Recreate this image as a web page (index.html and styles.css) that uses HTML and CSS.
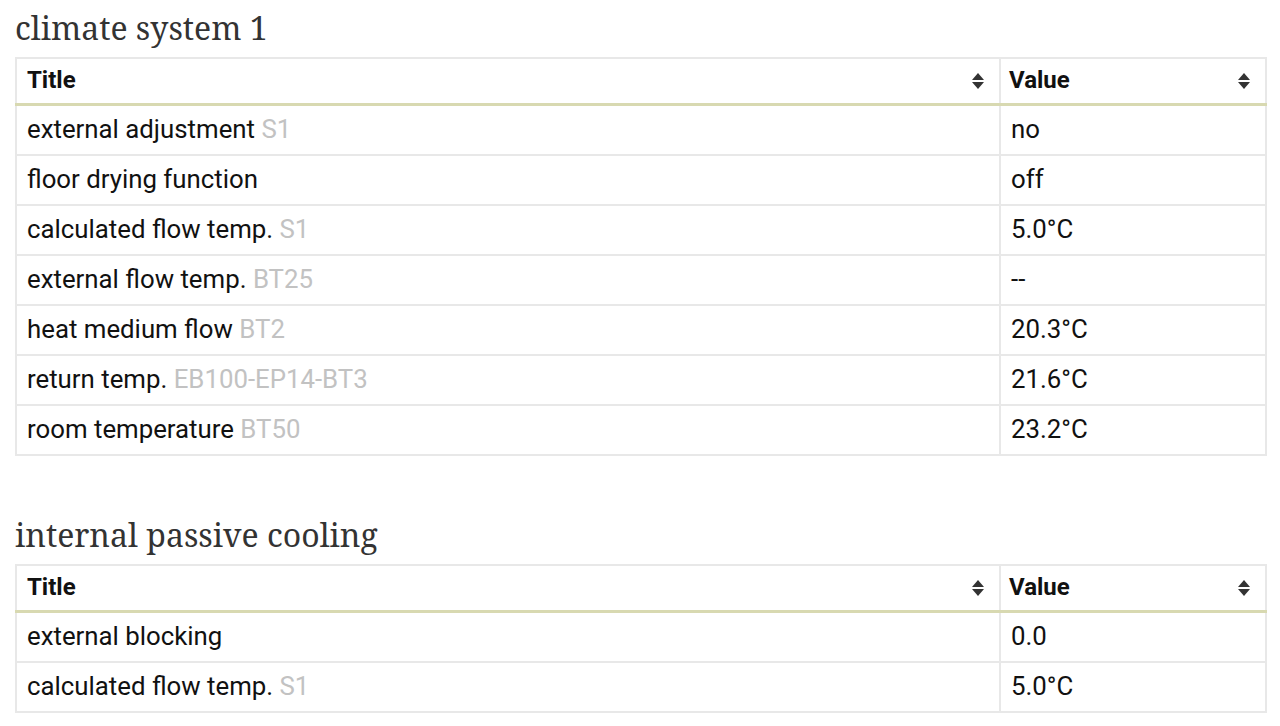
FILE: index.html
```html
<!DOCTYPE html>
<html>
<head>
<meta charset="utf-8">
<link rel="stylesheet" href="styles.css">
</head>
<body>
<section class="group">
  <h2 class="group-title">climate system 1</h2>
  <table class="data">
    <colgroup><col class="c-title"><col class="c-value"></colgroup>
    <thead>
      <tr><th><span class="th-in">Title<span class="sort"></span></span></th><th><span class="th-in">Value<span class="sort"></span></span></th></tr>
    </thead>
    <tbody>
      <tr><td>external adjustment <span class="tag">S1</span></td><td>no</td></tr>
      <tr><td>floor drying function</td><td>off</td></tr>
      <tr><td>calculated flow temp. <span class="tag">S1</span></td><td>5.0°C</td></tr>
      <tr><td>external flow temp. <span class="tag">BT25</span></td><td>--</td></tr>
      <tr><td>heat medium flow <span class="tag">BT2</span></td><td>20.3°C</td></tr>
      <tr><td>return temp. <span class="tag">EB100-EP14-BT3</span></td><td>21.6°C</td></tr>
      <tr><td>room temperature <span class="tag">BT50</span></td><td>23.2°C</td></tr>
    </tbody>
  </table>
</section>
<section class="group">
  <h2 class="group-title">internal passive cooling</h2>
  <table class="data">
    <colgroup><col class="c-title"><col class="c-value"></colgroup>
    <thead>
      <tr><th><span class="th-in">Title<span class="sort"></span></span></th><th><span class="th-in">Value<span class="sort"></span></span></th></tr>
    </thead>
    <tbody>
      <tr><td>external blocking</td><td>0.0</td></tr>
      <tr><td>calculated flow temp. <span class="tag">S1</span></td><td>5.0°C</td></tr>
    </tbody>
  </table>
</section>
</body>
</html>
```

FILE: styles.css
```css
html, body { margin: 0; padding: 0; background: #fff; }
body { padding: 0 15px; font-family: Roboto, "Liberation Sans", sans-serif; color: #111; }
.group { margin-bottom: 51px; }
.group-title {
  font-family: "Noto Serif", "DejaVu Serif", serif;
  font-weight: normal;
  font-size: 32px;
  color: #333;
  margin: 0;
  padding-top: 6px;
  height: 51px;
  line-height: 44px;
}
.data {
  width: 1250px;
  border-collapse: collapse;
  table-layout: fixed;
  font-size: 25.8px;
  border: 2px solid #e8e8e8;
}
.c-title { width: 984px; }
.c-value { width: 266px; }
.data th, .data td {
  border: 2px solid #e8e8e8;
  text-align: left;
  padding: 0 10px 3px;
}
.data th {
  height: 41px;
  font-weight: bold;
  font-size: 24px;
  border-bottom: 3px solid #d8d9b1;
}
.data th:last-child { padding-left: 8px; }
.th-in { display: flex; align-items: center; justify-content: space-between; }
.sort {
  width: 12px; height: 16px; position: relative; margin-right: 5px; top: 1px;
}
.sort::before, .sort::after {
  content: ""; position: absolute; left: 0;
  border-left: 6px solid transparent; border-right: 6px solid transparent;
}
.sort::before { top: 0; border-bottom: 7px solid #333; }
.sort::after { bottom: 0; border-top: 7px solid #333; }
.data td { height: 45px; }
.tag { color: #c2c2c2; }
```
